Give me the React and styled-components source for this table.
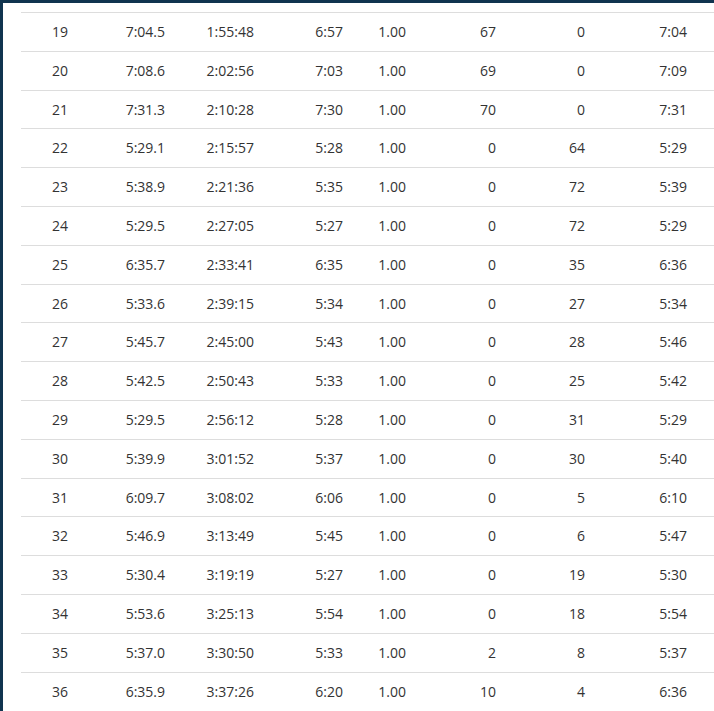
import React from 'react';
import styled, { createGlobalStyle } from 'styled-components';

const GlobalStyle = createGlobalStyle`
  html, body {
    margin: 0;
    padding: 0;
    background: #10344f;
  }
  body {
    font-family: "Open Sans", "Liberation Sans", sans-serif;
    font-size: 14px;
    color: #333;
  }
`;

const Frame = styled.div`
  padding: 3px 0 0 3px;
  height: 711px;
  box-sizing: border-box;
  overflow: hidden;
`;

const Panel = styled.div`
  background: #fff;
  height: 100%;
  padding: 9px 0 0 18px;
  box-sizing: border-box;
  overflow: hidden;
`;

const Table = styled.table`
  width: 693px;
  border-collapse: collapse;
  table-layout: fixed;
`;

const Row = styled.tr`
  border-top: 1px solid #dddddd;
`;

const Cell = styled.td`
  width: ${(p) => p.$w}px;
  padding: 8px ${(p) => p.$pr || 8}px 8px 0;
  line-height: 21.8px;
  text-align: right;
  white-space: nowrap;
  box-sizing: border-box;
`;

const widths = [55, 97, 90, 88, 63, 90, 89, 121];
const pads = [8, 8, 9, 8, 8, 8, 8, 27];

const rows = [
  ['19', '7:04.5', '1:55:48', '6:57', '1.00', '67', '0', '7:04'],
  ['20', '7:08.6', '2:02:56', '7:03', '1.00', '69', '0', '7:09'],
  ['21', '7:31.3', '2:10:28', '7:30', '1.00', '70', '0', '7:31'],
  ['22', '5:29.1', '2:15:57', '5:28', '1.00', '0', '64', '5:29'],
  ['23', '5:38.9', '2:21:36', '5:35', '1.00', '0', '72', '5:39'],
  ['24', '5:29.5', '2:27:05', '5:27', '1.00', '0', '72', '5:29'],
  ['25', '6:35.7', '2:33:41', '6:35', '1.00', '0', '35', '6:36'],
  ['26', '5:33.6', '2:39:15', '5:34', '1.00', '0', '27', '5:34'],
  ['27', '5:45.7', '2:45:00', '5:43', '1.00', '0', '28', '5:46'],
  ['28', '5:42.5', '2:50:43', '5:33', '1.00', '0', '25', '5:42'],
  ['29', '5:29.5', '2:56:12', '5:28', '1.00', '0', '31', '5:29'],
  ['30', '5:39.9', '3:01:52', '5:37', '1.00', '0', '30', '5:40'],
  ['31', '6:09.7', '3:08:02', '6:06', '1.00', '0', '5', '6:10'],
  ['32', '5:46.9', '3:13:49', '5:45', '1.00', '0', '6', '5:47'],
  ['33', '5:30.4', '3:19:19', '5:27', '1.00', '0', '19', '5:30'],
  ['34', '5:53.6', '3:25:13', '5:54', '1.00', '0', '18', '5:54'],
  ['35', '5:37.0', '3:30:50', '5:33', '1.00', '2', '8', '5:37'],
  ['36', '6:35.9', '3:37:26', '6:20', '1.00', '10', '4', '6:36'],
];

export default function App() {
  return (
    <>
      <GlobalStyle />
      <Frame>
        <Panel>
          <Table>
            <tbody>
              {rows.map((r) => (
                <Row key={r[0]}>
                  {r.map((v, i) => (
                    <Cell key={i} $w={widths[i]} $pr={pads[i]}>
                      {v}
                    </Cell>
                  ))}
                </Row>
              ))}
            </tbody>
          </Table>
        </Panel>
      </Frame>
    </>
  );
}
